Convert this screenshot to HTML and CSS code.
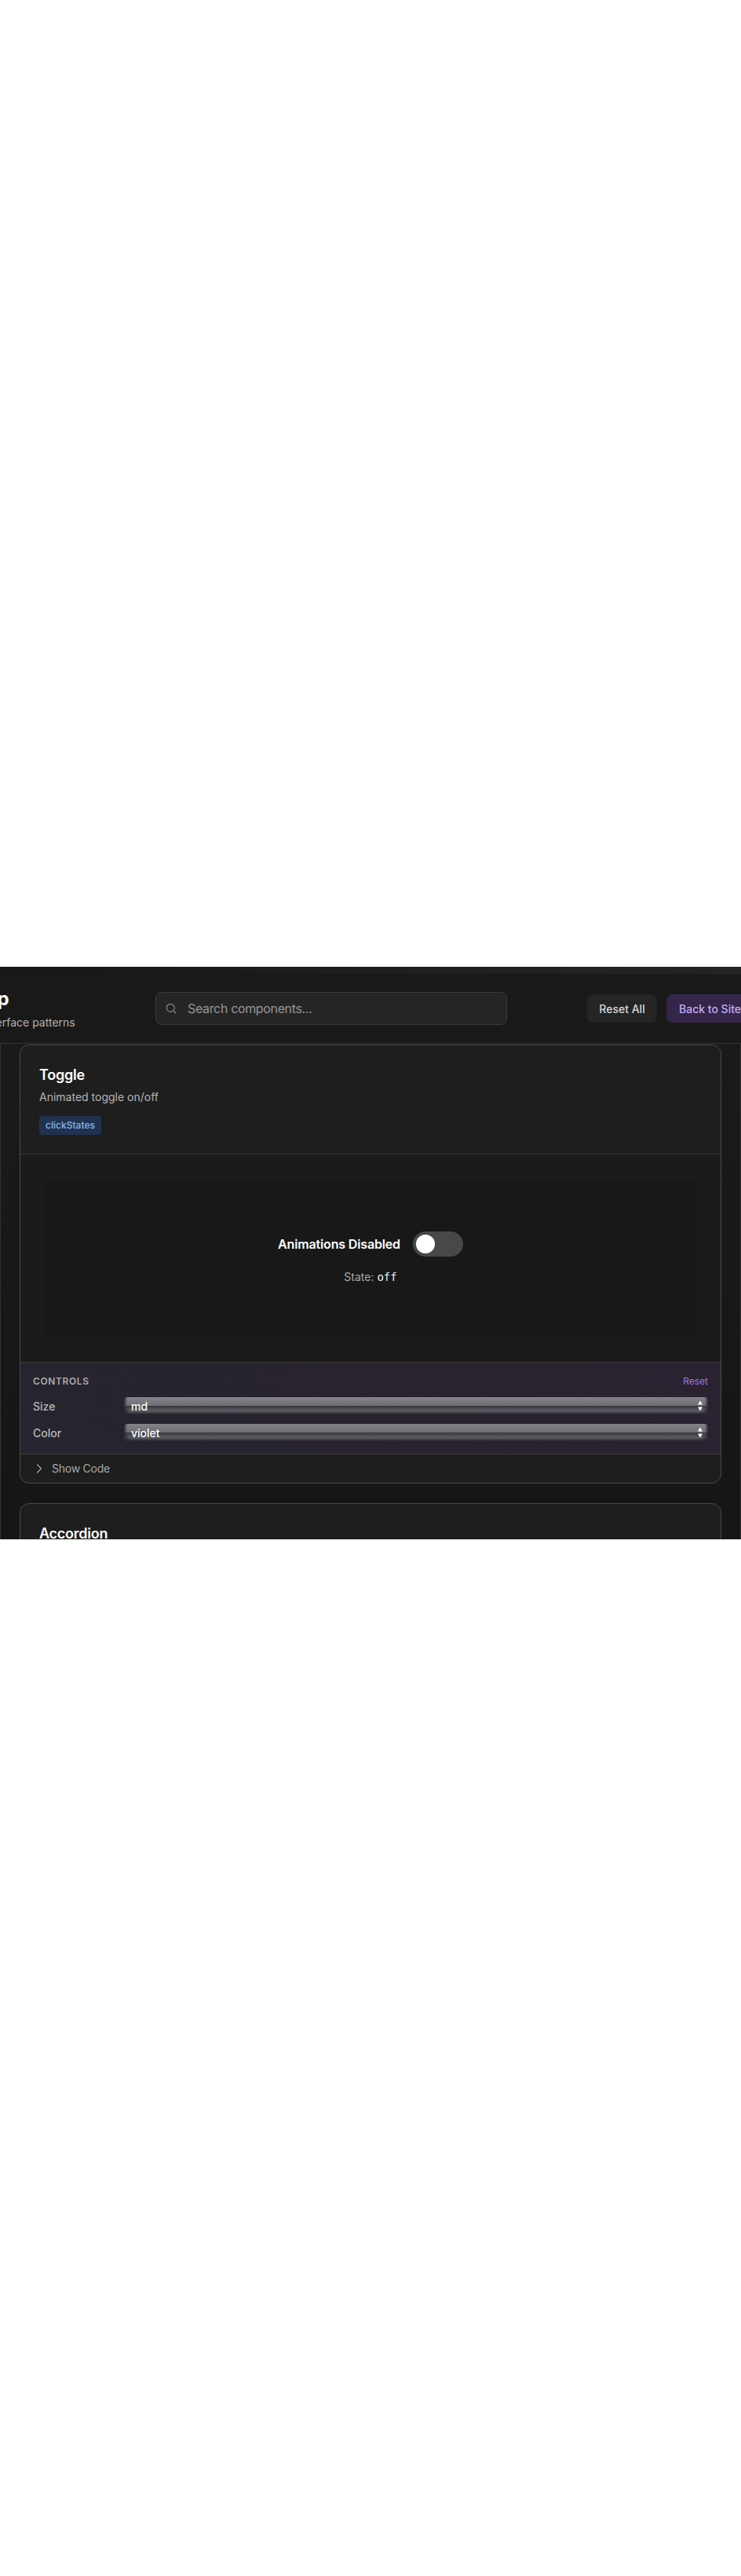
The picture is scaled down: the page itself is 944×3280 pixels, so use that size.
FILE: index.html
```html
<!DOCTYPE html>
<html lang="en">
<head>
<meta charset="utf-8">
<title>UI Workshop</title>
<link rel="stylesheet" href="styles.css">
</head>
<body>
<div class="app">
  <div class="strip"></div>
  <header class="topbar">
    <div class="brand">
      <h1 class="brand-title">UI Workshop</h1>
      <p class="brand-sub">Interactive user interface patterns</p>
    </div>
    <div class="search">
      <svg class="search-icon" width="16" height="16" viewBox="0 0 24 24" fill="none" stroke="currentColor" stroke-width="1.8" stroke-linecap="round"><circle cx="11" cy="11" r="7.5"/><path d="M21 21l-4.6-4.6"/></svg>
      <input class="search-input" type="text" placeholder="Search components...">
    </div>
    <div class="actions">
      <button class="btn btn-plain">Reset All</button>
      <button class="btn btn-accent">Back to Site</button>
    </div>
  </header>
  <main class="content">
    <section class="card">
      <div class="card-head">
        <h2 class="card-title">Toggle</h2>
        <p class="card-desc">Animated toggle on/off</p>
        <span class="tag">clickStates</span>
      </div>
      <div class="preview">
        <div class="stage">
          <div class="toggle-row">
            <span class="toggle-label">Animations Disabled</span>
            <span class="switch"><span class="knob"></span></span>
          </div>
          <p class="state">State: <code class="state-value">off</code></p>
        </div>
      </div>
      <div class="controls">
        <div class="controls-head">
          <span class="controls-title">CONTROLS</span>
          <span class="controls-reset">Reset</span>
        </div>
        <div class="control">
          <label class="control-label">Size</label>
          <div class="select-wrap">
            <select class="select"><option>md</option></select>
            <svg class="select-arrows" width="8" height="14" viewBox="0 0 8 14" fill="#fff"><path d="M4 0.5L7 5.5H1z"/><path d="M4 13.5L1 8.5H7z"/></svg>
          </div>
        </div>
        <div class="control">
          <label class="control-label">Color</label>
          <div class="select-wrap">
            <select class="select"><option>violet</option></select>
            <svg class="select-arrows" width="8" height="14" viewBox="0 0 8 14" fill="#fff"><path d="M4 0.5L7 5.5H1z"/><path d="M4 13.5L1 8.5H7z"/></svg>
          </div>
        </div>
      </div>
      <div class="code-toggle">
        <svg width="16" height="16" viewBox="0 0 16 16" fill="none" stroke="currentColor" stroke-width="1.2" stroke-linecap="round" stroke-linejoin="round"><path d="M5.5 3l5 5-5 5"/></svg>
        <span>Show Code</span>
      </div>
    </section>
    <section class="card">
      <div class="card-head">
        <h2 class="card-title">Accordion</h2>
      </div>
    </section>
  </main>
</div>
</body>
</html>
```

FILE: styles.css
```css
* {
  box-sizing: border-box;
}

html,
body {
  margin: 0;
  background: #fff;
}

body {
  height: 3280px;
  padding-top: 1231px;
  font-family: Inter, "Liberation Sans", sans-serif;
  overflow: hidden;
}

.app {
  width: 944px;
  height: 729px;
  overflow: hidden;
  background: #141414;
  color: #fff;
}

.strip {
  height: 9px;
  background: linear-gradient(90deg, #171717, #252525);
}

.topbar {
  display: flex;
  align-items: center;
  height: 89px;
  background: #191919;
  border-bottom: 1px solid #333;
}

.brand {
  flex: none;
  width: 326px;
  margin-left: -128px;
  white-space: nowrap;
}

.brand-title {
  margin: 0 0 4px;
  font-size: 24px;
  line-height: 32px;
  font-weight: 700;
  letter-spacing: -1.1px;
}

.brand-sub {
  margin: 0;
  font-size: 14px;
  line-height: 20px;
  color: #b2b2b2;
}

.search {
  position: relative;
  flex: none;
  width: 448px;
  height: 42px;
  margin-right: 102px;
}

.search-icon {
  position: absolute;
  left: 12px;
  top: 13px;
  color: #8a8a8a;
}

.search-input {
  width: 100%;
  height: 100%;
  padding: 0 12px 0 40px;
  background: #252525;
  border: 1px solid #3b3b3b;
  border-radius: 8px;
  font: 400 16px Inter, "Liberation Sans", sans-serif;
  letter-spacing: -0.35px;
  color: #fff;
  outline: none;
}

.search-input::placeholder {
  color: #969696;
  opacity: 1;
}

.actions {
  display: flex;
  flex: none;
  gap: 12px;
}

.btn {
  height: 36px;
  padding: 0 16px;
  border: 0;
  border-radius: 8px;
  font: 500 14px Inter, "Liberation Sans", sans-serif;
  white-space: nowrap;
}

.btn-plain {
  width: 89px;
  padding: 0;
  background: #252525;
  color: #d8d8d8;
}

.btn-accent {
  background: #33264a;
  color: #c4aef2;
}

.content {
  height: 631px;
  padding: 1px 24px 0;
  border-left: 1px solid #333;
  border-right: 1px solid #333;
  background: linear-gradient(180deg, #1a1a1a, #161616 90%);
}

.card {
  margin-bottom: 25px;
  background: #1e1e1e;
  border: 1px solid #4a4a4a;
  border-radius: 12px;
  overflow: hidden;
}

.card-head {
  padding: 24px;
  border-bottom: 1px solid #383838;
}

.card-title {
  margin: 0;
  font-size: 18px;
  line-height: 27px;
  font-weight: 600;
  letter-spacing: -0.25px;
}

.card-desc {
  margin: 4px 0 14px;
  font-size: 14px;
  line-height: 21px;
  color: #b6b6b6;
}

.tag {
  display: block;
  width: 79px;
  height: 24px;
  text-align: center;
  background: #20324f;
  border-radius: 4px;
  font-size: 12px;
  line-height: 24px;
  font-weight: 500;
  color: #86baf5;
}

.preview {
  padding: 32px;
  background: #1b1b1b;
}

.stage {
  display: flex;
  flex-direction: column;
  align-items: center;
  justify-content: center;
  gap: 16px;
  height: 200px;
  background: #181818;
  border-radius: 8px;
}

.toggle-row {
  display: flex;
  align-items: center;
  gap: 16px;
}

.toggle-label {
  font-size: 16px;
  font-weight: 600;
  letter-spacing: -0.15px;
}

.switch {
  display: block;
  position: relative;
  width: 64px;
  height: 32px;
  border-radius: 16px;
  background: #484848;
}

.knob {
  position: absolute;
  left: 4px;
  top: 4px;
  width: 24px;
  height: 24px;
  border-radius: 50%;
  background: #fff;
}

.state {
  margin: 0;
  font-size: 14px;
  line-height: 20px;
  color: #a8a8a8;
}

.state-value {
  font-family: "DejaVu Sans Mono", "Liberation Mono", monospace;
  font-size: 14px;
  color: #f0f0f0;
}

.controls {
  padding: 15px 16px 16px;
  background: linear-gradient(90deg, #26242e, #2a2230);
  border-top: 1px solid #3a3a3a;
  border-bottom: 1px solid #3a3a3a;
}

.controls-head {
  display: flex;
  justify-content: space-between;
  align-items: center;
  height: 16px;
  margin-bottom: 13px;
}

.controls-title {
  font-size: 12px;
  font-weight: 600;
  letter-spacing: 0.05em;
  color: #ababab;
}

.controls-reset {
  font-size: 12px;
  color: #9a78e8;
}

.control {
  display: flex;
  align-items: center;
  height: 22px;
}

.control + .control {
  margin-top: 12px;
}

.control-label {
  flex: none;
  width: 116px;
  font-size: 14px;
  font-weight: 500;
  color: #b8b8b8;
}

.select-wrap {
  position: relative;
  flex: 1;
  height: 22px;
}

.select {
  display: block;
  width: 100%;
  height: 22px;
  padding: 0 0 0 9px;
  border: 0;
  border-radius: 5px;
  appearance: none;
  font: 500 14px Inter, "Liberation Sans", sans-serif;
  color: #fff;
  background: linear-gradient(180deg, #848389 0%, #706f75 48%, #38363c 50%, #5a595f 76%, #78777d 100%);
  box-shadow: inset 5px -5px 3px -3px #2e2c34, inset -5px -5px 3px -3px #2e2c34;
  outline: none;
}

.select-arrows {
  position: absolute;
  right: 6px;
  top: 4px;
}

.code-toggle {
  display: flex;
  align-items: center;
  gap: 8px;
  height: 36px;
  padding: 0 16px;
  font-size: 14px;
  line-height: 20px;
  letter-spacing: -0.25px;
  color: #a8a8a8;
}
```
